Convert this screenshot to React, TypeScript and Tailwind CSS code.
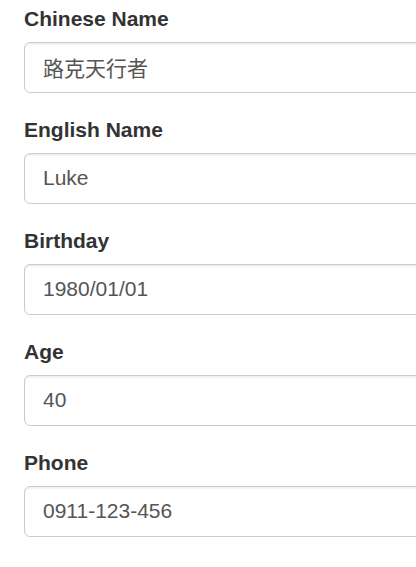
const fields = [
  { label: "Chinese Name", value: "路克天行者" },
  { label: "English Name", value: "Luke" },
  { label: "Birthday", value: "1980/01/01" },
  { label: "Age", value: "40" },
  { label: "Phone", value: "0911-123-456" },
];

export default function App() {
  return (
    <div
      className="w-[416px] h-[567px] overflow-hidden bg-white pl-6 pt-[4px]"
      style={{ fontFamily: '"Liberation Sans", Arial, "Noto Sans CJK TC", sans-serif' }}
    >
      {fields.map((f) => (
        <div key={f.label} className="mb-[22.5px] w-[560px]">
          <label className="mb-[7.5px] block text-[21px] font-bold leading-[30px] text-[#333]">
            {f.label}
          </label>
          <input
            readOnly
            value={f.value}
            className="block h-[51px] w-full rounded-[6px] border-[1.5px] border-[#ccc] bg-white px-[18px] py-[9px] text-[21px] leading-[30px] text-[#555] shadow-[inset_0_1.5px_1.5px_rgba(0,0,0,0.075)] outline-none"
            style={{ fontFamily: '"Liberation Sans", Arial, "Noto Sans CJK TC", sans-serif' }}
          />
        </div>
      ))}
    </div>
  );
}
